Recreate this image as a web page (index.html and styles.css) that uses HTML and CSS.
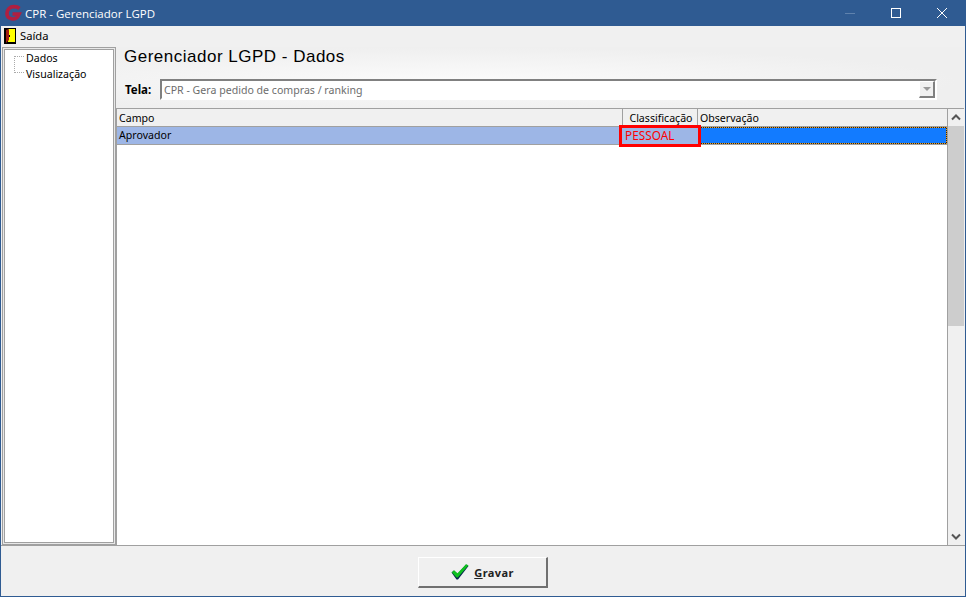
FILE: index.html
```html
<!DOCTYPE html>
<html lang="en">
<head>
    <meta charset="UTF-8">
    <title>CPR - Gerenciador LGPD</title>
    <link rel="stylesheet" href="styles.css">
</head>
<body>
    <div class="window">
        <div class="titlebar">
            <svg class="app-icon" width="18" height="18" viewBox="0 0 18 18">
                <path d="M15.5 4.5 C12.5 2 7.5 2 5 4.5 C2 7.5 2.5 12.5 5.5 14 C8.5 15.5 11.5 15 13.5 13 L15 10 H8.5" stroke="#b01f40" stroke-width="3.6" fill="none"/>
            </svg>
            <span class="title">CPR - Gerenciador LGPD</span>
            <div class="win-buttons">
                <svg width="46" height="26" viewBox="0 0 46 26"><path d="M18 13.5h10" stroke="#5f82ad" fill="none"/></svg>
                <svg width="46" height="26" viewBox="0 0 46 26"><rect x="18.5" y="8.5" width="9" height="9" stroke="#fff" fill="none"/></svg>
                <svg width="46" height="26" viewBox="0 0 46 26"><path d="M18 8l10 10M28 8l-10 10" stroke="#fff" fill="none"/></svg>
            </div>
        </div>
        <div class="menubar">
            <svg class="exit-icon" width="12" height="16" viewBox="0 0 12 16">
                <rect x="0" y="0" width="12" height="16" fill="#000"/>
                <rect x="4" y="1" width="7" height="13" fill="#ffff00"/>
                <path d="M2 2 L5 1 V12 L2 15 Z" fill="#a01c14"/>
                <rect x="5" y="7" width="1" height="2" fill="#000"/>
            </svg>
            <span>Saída</span>
        </div>
        <div class="main">
            <div class="tree">
                <div class="tree-lines"></div>
                <div class="tree-item">Dados</div>
                <div class="tree-item">Visualização</div>
            </div>
            <div class="content">
                <div class="header">
                    <h1>Gerenciador LGPD - Dados</h1>
                    <div class="screen-row">
                        <label>Tela:</label>
                        <div class="combo">
                            <span class="combo-text">CPR - Gera pedido de compras / ranking</span>
                            <div class="combo-btn"><span class="combo-arrow"></span></div>
                        </div>
                    </div>
                </div>
                <div class="grid-wrap">
                    <div class="grid">
                        <div class="row head">
                            <div class="cell c1">Campo</div>
                            <div class="cell c2 center">Classificação</div>
                            <div class="cell c3">Observação</div>
                        </div>
                        <div class="row selected">
                            <div class="cell c1">Aprovador</div>
                            <div class="cell c2 red">PESSOAL</div>
                            <div class="cell c3 current"></div>
                        </div>
                        <div class="highlight"></div>
                    </div>
                    <div class="scrollbar">
                        <svg width="16" height="17" viewBox="0 0 16 17"><path d="M4 10.5l4-4 4 4" stroke="#555" stroke-width="2" fill="none"/></svg>
                        <div class="track"><div class="thumb"></div></div>
                        <svg width="16" height="17" viewBox="0 0 16 17"><path d="M4 6.5l4 4 4-4" stroke="#555" stroke-width="2" fill="none"/></svg>
                    </div>
                </div>
            </div>
        </div>
        <div class="footer">
            <button class="save">
                <svg width="18" height="16" viewBox="0 0 18 16">
                    <path d="M0.5 8.5 L3 6.5 L6.5 10 L15 0.5 L17.5 2 L7 15.5 L5.5 15.5 Z" fill="#06264f"/>
                    <path d="M0.8 8.2 L3 6.2 L6.5 9.2 L15 0.2 L17.5 1.2 L6.8 13.5 L5.5 13.5 Z" fill="#0fc020"/>
                </svg>
                <span><u>G</u>ravar</span>
            </button>
        </div>
    </div>
</body>
</html>
```

FILE: styles.css
```css
html, body {
    margin: 0;
    padding: 0;
}
body {
    width: 966px;
    height: 597px;
    overflow: hidden;
    font-family: "Noto Sans", sans-serif;
    font-size: 10.6px;
    color: #000;
}
.window {
    width: 966px;
    height: 597px;
    box-sizing: border-box;
    display: flex;
    flex-direction: column;
    background-color: #f0f0f0;
    border: 1px solid #2f5b92;
    border-top: 0;
}
.titlebar {
    height: 26px;
    flex: none;
    display: flex;
    align-items: center;
    background-color: #2f5b92;
    color: #fff;
}
.app-icon {
    margin-left: 3px;
}
.title {
    margin-left: 3px;
    font-family: "Open Sans", sans-serif;
    font-size: 11.5px;
}
.win-buttons {
    margin-left: auto;
    display: flex;
}
.win-buttons svg {
    display: block;
}
.menubar {
    height: 19px;
    flex: none;
    display: flex;
    align-items: center;
    gap: 4px;
    padding-left: 3px;
    font-size: 11.2px;
}
.main {
    flex: 1;
    display: flex;
    min-height: 0;
    padding: 2px 1px 0 1px;
}
.tree {
    width: 114px;
    box-sizing: border-box;
    position: relative;
    background-color: #fff;
    border: 1px solid #a0a0a0;
    box-shadow: inset 0 0 0 1px #e8e8e8, inset 0 0 0 2px #a0a0a0;
    padding-top: 2px;
}
.tree-lines {
    position: absolute;
    left: 11px;
    top: 8px;
    width: 10px;
    height: 17px;
    border-left: 1px dotted #aaa;
    border-top: 1px dotted #aaa;
    border-bottom: 1px dotted #aaa;
    box-sizing: border-box;
}
.tree-item {
    height: 16px;
    line-height: 16px;
    padding-left: 23px;
}
.content {
    flex: 1;
    display: flex;
    flex-direction: column;
    min-width: 0;
}
.header {
    height: 61px;
    flex: none;
    box-sizing: border-box;
    padding: 0 8px;
    background: radial-gradient(ellipse at 40% 55%, #fbfbfb 0%, #efefef 70%);
}
h1 {
    margin: 0;
    height: 32px;
    box-sizing: border-box;
    padding-top: 1px;
    line-height: 18px;
    font-family: "Liberation Sans", sans-serif;
    font-size: 17px;
    font-weight: normal;
    letter-spacing: 0.5px;
}
.screen-row {
    display: flex;
    align-items: center;
}
.screen-row label {
    width: 36px;
    flex: none;
    padding-left: 1px;
    box-sizing: border-box;
    font-weight: bold;
    font-size: 11.5px;
}
.combo {
    width: 777px;
    height: 21px;
    box-sizing: border-box;
    display: flex;
    align-items: center;
    justify-content: space-between;
    background-color: #fff;
    border: 2px solid #fff;
    border-top-color: #808080;
    border-left-color: #808080;
    color: #6d6d6d;
}
.combo-text {
    padding-left: 2px;
}
.combo-btn {
    width: 16px;
    height: 17px;
    box-sizing: border-box;
    display: flex;
    align-items: center;
    justify-content: center;
    background-color: #f0f0f0;
    border: 1px solid #fff;
    border-right: 2px solid #808080;
    border-bottom: 2px solid #808080;
}
.combo-arrow {
    width: 0;
    height: 0;
    border-left: 4px solid transparent;
    border-right: 4px solid transparent;
    border-top: 4px solid #999;
}
.grid-wrap {
    flex: 1;
    min-height: 0;
    display: flex;
    border: 1px solid #a0a0a0;
    border-right: 0;
    border-bottom: 0;
    background-color: #fff;
}
.grid {
    flex: 1;
    min-width: 0;
    position: relative;
}
.row {
    display: flex;
    height: 18px;
    box-sizing: border-box;
    line-height: 17px;
    border-bottom: 1px solid #a0a0a0;
}
.head {
    background-color: #f0f0f0;
    line-height: 19px;
}
.cell {
    box-sizing: border-box;
    padding-left: 2px;
    white-space: nowrap;
    overflow: hidden;
}
.c1 {
    width: 506px;
}
.c2 {
    width: 75px;
}
.c3 {
    flex: 1;
}
.head .cell {
    border-right: 1px solid #a0a0a0;
}
.head .c3 {
    border-right: 0;
}
.center {
    text-align: center;
}
.selected {
    background-color: #9db6e6;
}
.red {
    color: #f00;
    font-size: 11.8px;
}
.current {
    background-color: #127bff;
    border: 1px solid #222;
    outline: 1px dotted #f0a020;
    outline-offset: -1px;
}
.highlight {
    position: absolute;
    left: 502px;
    top: 16px;
    width: 82px;
    height: 22px;
    box-sizing: border-box;
    border: 3px solid #f00;
}
.scrollbar {
    width: 17px;
    flex: none;
    display: flex;
    flex-direction: column;
    background-color: #f0f0f0;
    border-left: 1px solid #a0a0a0;
    box-sizing: border-box;
}
.scrollbar svg {
    display: block;
    flex: none;
}
.track {
    flex: 1;
}
.thumb {
    height: 200px;
    background-color: #cdcdcd;
}
.footer {
    height: 51px;
    flex: none;
    display: flex;
    align-items: flex-start;
    justify-content: center;
    border-top: 1px solid #a0a0a0;
    box-sizing: border-box;
}
.save {
    width: 130px;
    height: 31px;
    margin-top: 11px;
    display: flex;
    align-items: center;
    justify-content: center;
    gap: 5px;
    background-color: #f0f0f0;
    border: 1px solid #fff;
    border-right: 2px solid #707070;
    border-bottom: 2px solid #707070;
    font-family: "Noto Sans", sans-serif;
    font-size: 11px;
    font-weight: bold;
    letter-spacing: 0.4px;
    padding: 0;
    color: #222;
}
```
